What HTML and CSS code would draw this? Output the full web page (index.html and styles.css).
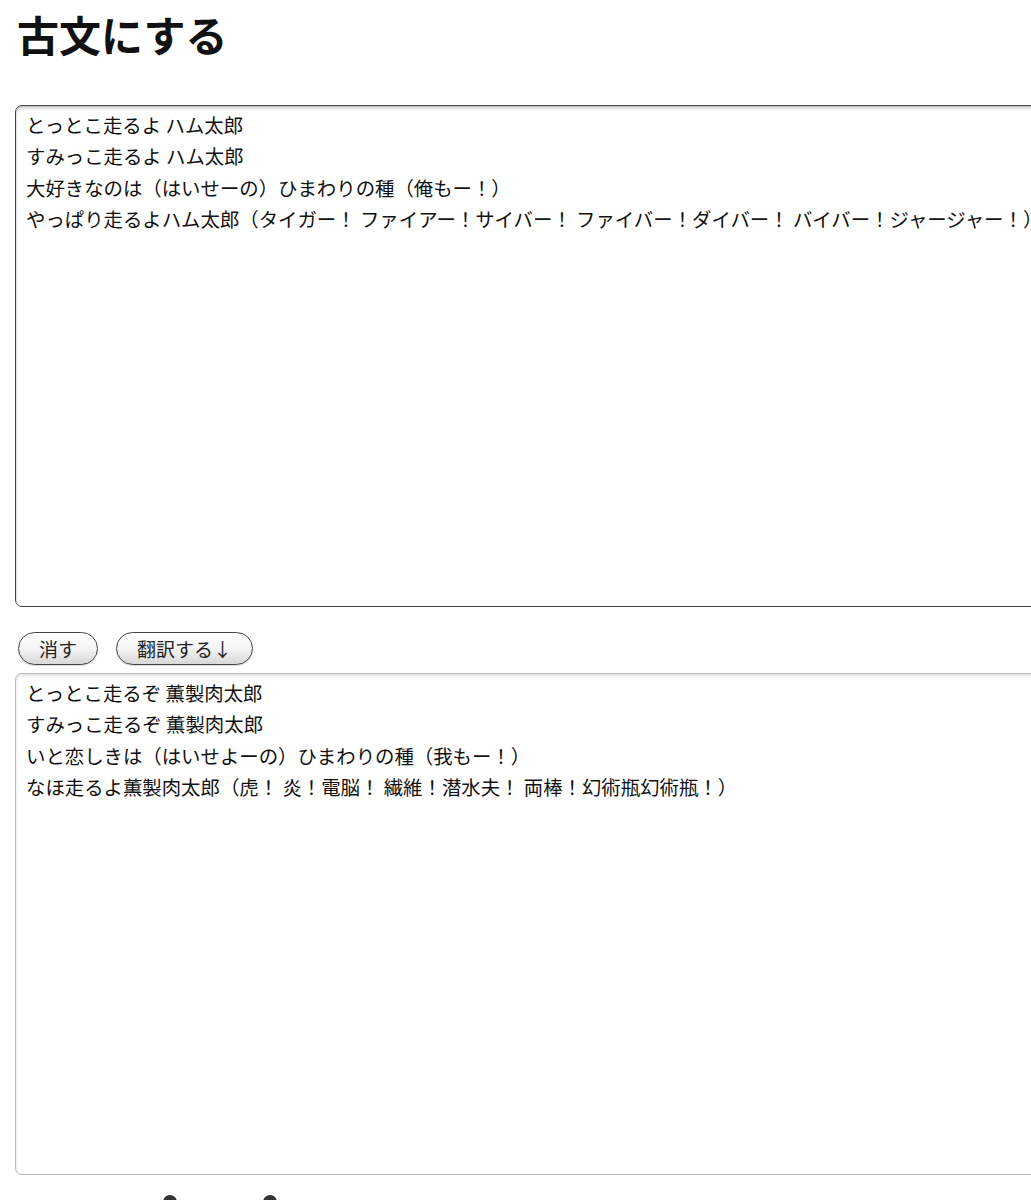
FILE: index.html
```html
<!DOCTYPE html>
<html lang="ja">
<head>
<meta charset="utf-8">
<title>古文にする</title>
<link rel="stylesheet" href="styles.css">
</head>
<body>
<h1 class="title">古文にする</h1>
<form class="translator">
<textarea class="box box-input" wrap="off">とっとこ走るよ ハム太郎
すみっこ走るよ ハム太郎
大好きなのは（はいせーの）ひまわりの種（俺もー！）
やっぱり走るよハム太郎（タイガー！ ファイアー！サイバー！ ファイバー！ダイバー！ バイバー！ジャージャー！）</textarea>
<div class="actions">
<button type="button" class="btn">消す</button>
<button type="button" class="btn">翻訳する↓</button>
</div>
<textarea class="box box-output" wrap="off" readonly>とっとこ走るぞ 薫製肉太郎
すみっこ走るぞ 薫製肉太郎
いと恋しきは（はいせよーの）ひまわりの種（我もー！）
なほ走るよ薫製肉太郎（虎！ 炎！電脳！ 繊維！潜水夫！ 両棒！幻術瓶幻術瓶！）</textarea>
<div class="options">
<span class="dot"></span>
<span class="dot"></span>
</div>
</form>
</body>
</html>
```
FILE: styles.css
```css
html, body {
  margin: 0;
  padding: 0;
  overflow-x: hidden;
  background: #fff;
}
body {
  font-family: "Noto Sans CJK JP", "Noto Sans", sans-serif;
  color: #111;
}
.title {
  margin: 10px 0 0 17px;
  font-size: 42px;
  line-height: 48px;
  font-weight: 700;
  color: #111;
}
.translator {
  display: flex;
  flex-direction: column;
  align-items: flex-start;
  padding-left: 15px;
  margin-top: 47px;
}
.box {
  box-sizing: border-box;
  width: 1100px;
  height: 502px;
  margin: 0;
  padding: 3px 10px;
  font-family: "Noto Sans CJK JP", "Noto Sans", sans-serif;
  font-size: 19.4px;
  line-height: 31.3px;
  color: #111;
  border-radius: 7px;
  resize: none;
  outline: none;
  background: #fff;
  overflow: hidden;
}
.box-input {
  border: 1.5px solid #444;
  box-shadow: inset 0 2px 3px rgba(0, 0, 0, 0.25);
}
.box-output {
  border: 1.5px solid #b8b8b8;
  box-shadow: inset 0 2px 3px rgba(0, 0, 0, 0.12);
}
.actions {
  display: flex;
  gap: 18px;
  margin: 25px 0 8px 3px;
}
.btn {
  height: 33px;
  padding: 0 20px;
  border: 1.5px solid #444;
  border-radius: 17px;
  background: linear-gradient(#ffffff 0%, #f4f4f4 50%, #d8d8d8 100%);
  font-family: "Noto Sans CJK JP", "Noto Sans", sans-serif;
  font-size: 19px;
  line-height: 30px;
  color: #222;
  box-shadow: 0 1px 1px rgba(0, 0, 0, 0.15);
}
.options {
  display: flex;
  gap: 86px;
  margin: 20px 0 0 148px;
}
.dot {
  width: 14px;
  height: 14px;
  border-radius: 50%;
  background: #333;
}
```
